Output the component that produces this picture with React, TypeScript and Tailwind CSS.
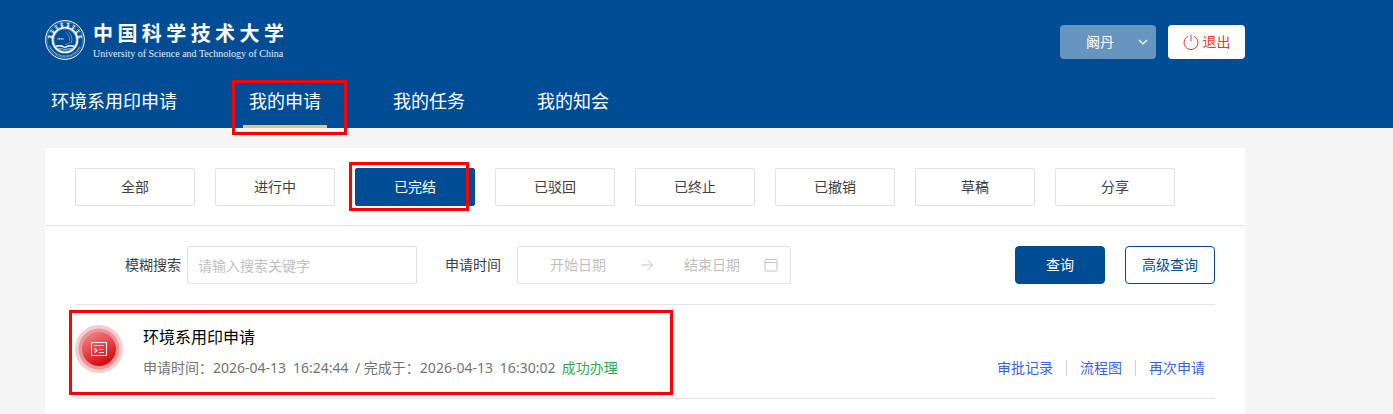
import React from "react";

const navItems = ["环境系用印申请", "我的申请", "我的任务", "我的知会"];
const filters = ["全部", "进行中", "已完结", "已驳回", "已终止", "已撤销", "草稿", "分享"];
const recordLinks = ["审批记录", "流程图", "再次申请"];

function Highlight({ className }: { className: string }) {
  return <span aria-hidden="true" className={`pointer-events-none absolute border-3 border-[#ff0000] ${className}`} />;
}

function Seal() {
  const marks = [-78, -56, -34, -12, 12, 34, 56, 78];
  return (
    <svg viewBox="0 0 40 40" className="size-10 shrink-0" fill="none" stroke="#fff" aria-hidden="true">
      <circle cx="20" cy="20" r="19.4" strokeWidth="1" />
      <circle cx="20" cy="20" r="17.9" strokeWidth="0.5" opacity="0.5" />
      <circle cx="20" cy="20" r="12.4" strokeWidth="1.9" />
      <circle cx="20" cy="20" r="11" strokeWidth="0.6" opacity="0.5" />
      {marks.map((angle) => (
        <g key={angle} transform={`rotate(${angle} 20 20)`} strokeWidth="0.7">
          <path d="M18.2 3.4h3.4M18.6 5h2.8M20 2.4v4.200M18.7 6.3l2.8-.4" />
        </g>
      ))}
      <path d="M5 26.500a16.400 16.400 0 0 0 30 0" strokeWidth="1.8" strokeDasharray="0.8 0.6" opacity="0.6" />
      <path d="M11 26.200c3.500-1 6.500-.5 9 1.300 2.500-1.800 5.500-2.300 9-1.300" strokeWidth="1.500" />
      <path d="M13 29c2.500-.6 5-.2 7 .9 2-1.100 4.500-1.500 7-.9" strokeWidth="1" opacity="0.7" />
      <path d="M12.500 18.800h6.500" strokeWidth="1.700" strokeDasharray="1.100 0.500" opacity="0.7" />
      <path d="M20.500 12c3 2 4.500 5 4 9M23.500 11.500c3 3 4 7 3 11M20 24.500c2.500-.5 5-1.500 7-3" strokeWidth="0.700" opacity="0.5" />
    </svg>
  );
}

function Logo() {
  return (
    <div className="flex items-center gap-2 text-white">
      <Seal />
      <div className="w-[191px]">
        <div className="flex justify-between font-['Liberation_Serif','Noto_Sans_CJK_SC',serif] text-[20px] leading-7 font-bold">
          {Array.from("中国科学技术大学").map((char, i) => (
            <span key={i}>{char}</span>
          ))}
        </div>
        <div className="font-['Liberation_Serif',serif] text-[10px] leading-3 whitespace-nowrap text-white/90">
          University of Science and Technology of China
        </div>
      </div>
    </div>
  );
}

function RecordIcon() {
  return (
    <svg viewBox="0 0 48 48" className="size-12 shrink-0" aria-hidden="true">
      <defs>
        <linearGradient id="record-fill" x1="0.2" y1="0" x2="0.7" y2="1">
          <stop offset="0" stopColor="#ee8487" />
          <stop offset="1" stopColor="#d80006" />
        </linearGradient>
      </defs>
      <circle cx="24" cy="24" r="24" fill="#f6cccd" />
      <circle cx="24" cy="24" r="20.500" fill="#ec9699" />
      <circle cx="24" cy="24" r="17" fill="url(#record-fill)" />
      <g fill="none" stroke="#fff">
        <path d="M16.500 17.500h15v13h-15z" />
        <path d="M19 20.500h10M24 24.500h5M24 27.500h5" opacity="0.850" />
        <path d="M19.500 23.500l2.300 2-2.300 2" strokeWidth="1.300" />
      </g>
    </svg>
  );
}

export default function App() {
  return (
    <div className="min-h-screen bg-[#f5f5f5] font-['Noto_Sans','Noto_Sans_CJK_SC',sans-serif] text-sm text-[#404040]">
      <header className="bg-[#004d95]">
        <div className="ml-[45px] max-w-[1200px]">
          <div className="flex h-20 items-center justify-between">
            <Logo />
            <div className="flex items-center gap-3 pt-1">
              <button type="button" className="flex h-[34px] w-24 items-center justify-end gap-6 rounded bg-[#6695bf] pr-2 text-white">
                阚丹
                <svg viewBox="0 0 10 10" className="size-2.5" fill="none" stroke="currentColor" strokeWidth="1.200" aria-hidden="true">
                  <path d="M1 3l4 4 4-4" />
                </svg>
              </button>
              <button type="button" className="flex h-[34px] w-[77px] items-center justify-center gap-1 rounded bg-white text-[#e93a2c]">
                <svg viewBox="0 0 16 16" className="size-4" fill="none" stroke="currentColor" strokeWidth="1" aria-hidden="true">
                  <path d="M5 2.300a7 7 0 1 0 6 0M8 0.500v7" />
                </svg>
                退出
              </button>
            </div>
          </div>
          <nav className="flex h-12 gap-[60px]">
            {navItems.map((item) => (
              <a
                key={item}
                href="#"
                className={`relative flex h-12 items-center border-b-3 px-1.5 pb-1 text-lg leading-6 text-white ${
                  item === "我的申请" ? "border-[#f5c15c]" : "border-transparent"
                }`}
              >
                {item}
                {item === "我的申请" && <Highlight className="top-0 -right-5 -bottom-2.5 -left-[11px]" />}
              </a>
            ))}
          </nav>
        </div>
      </header>

      <main className="mt-5 ml-[45px] min-h-[calc(100vh-148px)] max-w-[1200px] bg-white">
        <div className="flex gap-5 border-b border-[#e4e4e8] px-[30px] pt-5 pb-[19px]">
          {filters.map((label) => (
            <div key={label} className="relative">
              <button
                type="button"
                className={`h-[38px] w-[120px] rounded-xs border ${
                  label === "已完结" ? "border-[#004d95] bg-[#004d95] text-white" : "border-[#e1e1e8] bg-white"
                }`}
              >
                {label}
              </button>
              {label === "已完结" && <Highlight className="-top-1.5 right-1.5 -bottom-[5px] -left-1.5" />}
            </div>
          ))}
        </div>

        <div className="px-[30px]">
          <form className="flex items-center justify-between border-b border-[#e4e4e8] py-5 pl-[50px]" onSubmit={(e) => e.preventDefault()}>
            <div className="flex items-center">
              <label htmlFor="keyword" className="mr-1.5">模糊搜索</label>
              <input
                id="keyword"
                type="text"
                placeholder="请输入搜索关键字"
                className="h-[38px] w-[230px] rounded-xs border border-[#e1e1e8] px-2.5 placeholder:text-[#bfbfbf]"
              />
              <label htmlFor="start-date" className="mr-4 ml-7">申请时间</label>
              <div className="flex h-[38px] w-[274px] items-center rounded-xs border border-[#e1e1e8] px-3 text-[#c4c4c4]">
                <input id="start-date" type="text" placeholder="开始日期" className="w-24 text-center placeholder:text-[#bfbfbf]" />
                <svg viewBox="0 0 14 14" className="mx-3.5 size-3.5 shrink-0" fill="none" stroke="currentColor" aria-hidden="true">
                  <path d="M1.500 7h11M8 2.500L12.500 7 8 11.500" />
                </svg>
                <input aria-label="结束日期" type="text" placeholder="结束日期" className="w-[88px] text-center placeholder:text-[#bfbfbf]" />
                <svg viewBox="0 0 14 14" className="ml-auto size-3.5 shrink-0" fill="none" stroke="currentColor" aria-hidden="true">
                  <rect x="1" y="1.500" width="12" height="11.500" rx="1" />
                  <path d="M1 4.500h12" />
                  <path d="M3.500 0.500v1M10.500 0.500v1" />
                </svg>
              </div>
            </div>
            <div className="flex gap-5">
              <button type="submit" className="h-[38px] w-[90px] rounded border border-[#004d95] bg-[#004d95] text-white">查询</button>
              <button type="button" className="h-[38px] w-[90px] rounded border border-[#004d95] bg-white text-[#004d95]">高级查询</button>
            </div>
          </form>

          <article className="relative flex border-b border-[#e4e4e8] py-5">
            <RecordIcon />
            <div className="ml-5 flex-1">
              <h2 className="text-base leading-6 text-black">环境系用印申请</h2>
              <p className="mt-2 flex leading-[21px] whitespace-pre text-[#737373]">
                <span>申请时间：</span>
                <span className="w-20">2026-04-13</span>
                <span className="w-[62px]">16:24:44</span>
                <span>/ 完成于：</span>
                <span className="w-20">2026-04-13</span>
                <span className="w-[62px]">16:30:02</span>
                <span className="text-[#2fa84f]">成功办理</span>
              </p>
            </div>
            <div className="flex items-center self-end pr-2.5 pb-0.5">
              {recordLinks.map((label, i) => (
                <a
                  key={label}
                  href="#"
                  className={`leading-4 text-[#3a62dc] ${i > 0 ? "ml-[13px] border-l border-[#d4d4d4] pl-[13px]" : ""}`}
                >
                  {label}
                </a>
              ))}
            </div>
            <Highlight className="top-[5px] bottom-[3px] -left-1.5 w-[604px]" />
          </article>
        </div>
      </main>
    </div>
  );
}
